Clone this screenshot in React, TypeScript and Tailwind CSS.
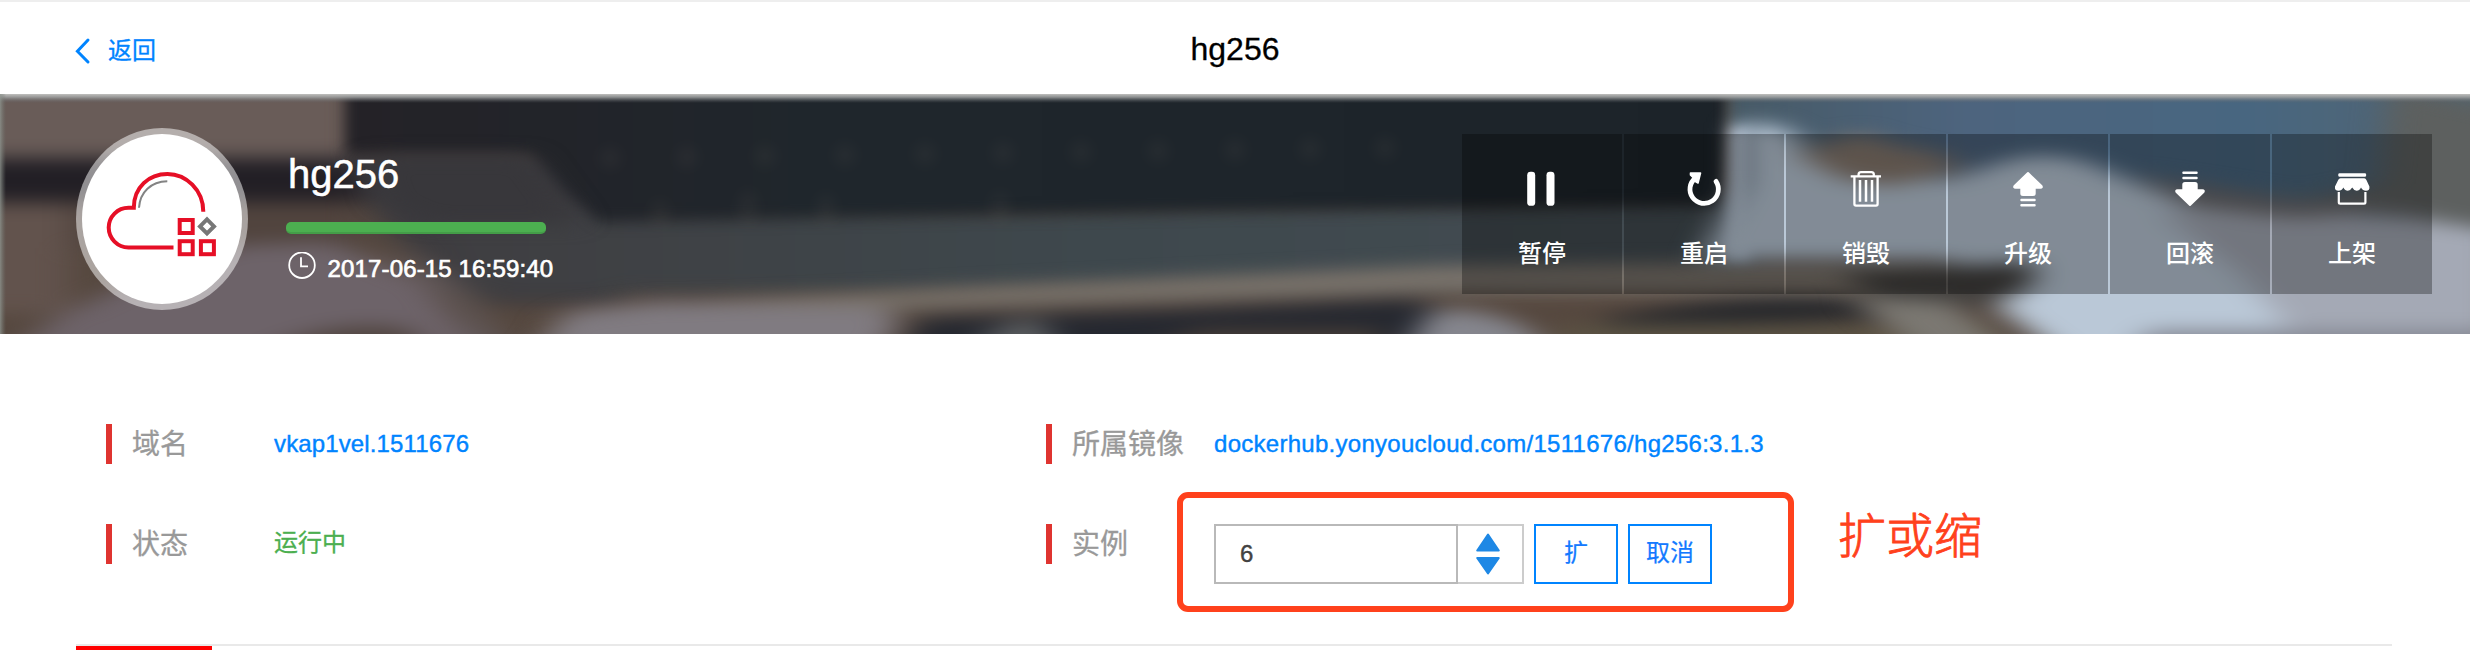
import type { ReactNode } from 'react';

const sans = "font-['Liberation_Sans','Noto_Sans_CJK_SC',sans-serif]";

function Backdrop() {
  return (
    <svg className="absolute inset-0 h-full w-full" viewBox="0 0 2470 240" preserveAspectRatio="none">
      <defs>
        <filter id="soft" x="-5%" y="-20%" width="110%" height="140%" colorInterpolationFilters="sRGB">
          <feGaussianBlur stdDeviation="16 9" />
        </filter>
        <filter id="fine" x="-5%" y="-20%" width="110%" height="140%" colorInterpolationFilters="sRGB">
          <feGaussianBlur stdDeviation="7" />
        </filter>
        <linearGradient id="top" x1="0" y1="0" x2="0" y2="1">
          <stop offset="0" stopColor="#c0c0be" />
          <stop offset="0.35" stopColor="#a0a2a2" stopOpacity="0.85" />
          <stop offset="1" stopColor="#606468" stopOpacity="0" />
        </linearGradient>
        <linearGradient id="left" x1="0" y1="0" x2="1" y2="0">
          <stop offset="0" stopColor="#8f958f" stopOpacity="0.8" />
          <stop offset="1" stopColor="#6f756f" stopOpacity="0" />
        </linearGradient>
        <linearGradient id="screen" x1="0" y1="0" x2="1" y2="0">
          <stop offset="0" stopColor="#242227" />
          <stop offset="0.35" stopColor="#1f262c" />
          <stop offset="1" stopColor="#1c2329" />
        </linearGradient>
        <linearGradient id="frame" x1="0" y1="0" x2="1" y2="0">
          <stop offset="0" stopColor="#3f3e41" />
          <stop offset="0.5" stopColor="#3e484d" />
          <stop offset="1" stopColor="#434c52" />
        </linearGradient>
        <linearGradient id="sky" x1="0" y1="0" x2="1" y2="0">
          <stop offset="0" stopColor="#475a66" />
          <stop offset="0.3" stopColor="#4d647e" />
          <stop offset="0.65" stopColor="#486680" />
          <stop offset="1" stopColor="#54646e" />
        </linearGradient>
      </defs>
      <rect width="2470" height="240" fill="#56483f" />
      <g filter="url(#soft)">
        <rect x="-60" y="-40" width="420" height="106" fill="#695c58" />
        <rect x="-60" y="64" width="440" height="44" fill="#221f25" />
        <rect x="-60" y="108" width="420" height="46" fill="#51443e" />
        <rect x="-60" y="110" width="130" height="110" fill="#62534d" />
        <path d="M-20 280L60 222L150 180L230 152L330 148L420 185L500 280Z" fill="#6d6369" />
        <path d="M220 280Q320 218 410 236L450 280Z" fill="#50443f" />
        <path d="M340 60H620V210H490L390 140Z" fill="#3c3b3f" />
        <path d="M385 150L460 215L490 280H535L450 180Z" fill="#5f5656" />
        <path d="M530 112L1000 118L1760 104V185L900 200H480L430 130Z" fill="url(#frame)" />
      </g>
      <g filter="url(#fine)">
        <path d="M345 -30H1727V40L1722 112L1200 118L900 123L600 128L565 100L530 62L345 62Z" fill="url(#screen)" />
      </g>
      <g filter="url(#soft)">
        <path d="M370 62H530L580 130H430L385 110Z" fill="#38373b" />
        <path d="M620 212L1000 192L1440 172L1760 168L1960 168V200L1440 198L1000 212L740 220L540 228Z" fill="#7b746c" />
        <path d="M510 280L570 218L660 208L880 214L900 228L860 280Z" fill="#807b81" />
        <path d="M895 280L920 224L1180 216L1410 205L1440 215L1380 280Z" fill="#252830" />
        <path d="M960 280Q985 222 1040 226L1080 280Z" fill="#5a5d60" />
        <path d="M1080 280L1200 236H1380V280Z" fill="#493f38" />
        <path d="M1390 280L1430 218Q1480 210 1530 236L1570 280Z" fill="#85868e" />
        <path d="M1600 226Q1700 204 1800 203Q1900 206 1910 218Q1840 232 1600 230Z" fill="#25272b" />
        <path d="M1560 232H1990V290H1560Z" fill="#5c5444" />
      </g>
      <g filter="url(#fine)">
        <path d="M1729 -40H2520V150H1729Z" fill="url(#sky)" />
        <path d="M1729 34L1750 34V165H1727Z" fill="#a9b6c6" />
      </g>
      <g filter="url(#soft)">
        <path d="M1742 28L1785 34L1840 85L1950 85L2010 66Q2060 54 2110 78L2190 112L2500 130V280H2090L2000 215L1950 166H1720L1700 166L1742 90Z" fill="#bac8d7" />
        <path d="M2160 118L2500 126V280H2330L2240 180Z" fill="#a4a9b5" />
        <path d="M2150 236H2520V290H2100Z" fill="#858893" />
        <path d="M2390 -10L2520 20V140L2400 122L2270 112L2380 90Z" fill="#5d605f" />
        <path d="M1795 60L1860 40L1890 50L1950 62L1960 76L1890 92L1840 84Z" fill="#87796e" />
        <path d="M1840 178L2030 168Q2050 196 1980 212L1880 205Z" fill="#413f3d" />
        <path d="M1850 203L1950 208L2050 290H1960Z" fill="#7b7872" />
        <path d="M2130 80L2290 104L2440 114L2300 124L2190 114Z" fill="#6a696c" />
      </g>
      <g filter="url(#fine)" opacity="0.1" fill="#706860">
        {[610, 687, 765, 845, 925, 1003, 1081, 1158, 1235, 1310, 1385].map((x, i) => (
          <ellipse key={x} cx={x} cy={64 - i} rx="11" ry="11" />
        ))}
        <ellipse cx="660" cy="120" rx="10" ry="14" />
        <ellipse cx="748" cy="114" rx="10" ry="18" />
        <ellipse cx="826" cy="116" rx="10" ry="16" />
        <ellipse cx="1000" cy="114" rx="10" ry="16" />
      </g>
      <rect width="2470" height="9" fill="url(#top)" />
      <rect width="6" height="240" fill="url(#left)" />
    </svg>
  );
}

function CloudLogo() {
  return (
    <svg className="h-[170px] w-[160px]" viewBox="0 0 160 170" fill="none" stroke="#e60f26" strokeWidth="4">
      <path d="M91.5 113.4H46.5A19.8 19.8 0 0 1 46.5 73.8H51.8C51.8 53 67 40 85.5 40S121.3 56 121.3 77.7" />
      <path d="M57 73.7C58 58 69 47.5 85.3 47.2" stroke="#838383" strokeWidth="2" />
      <rect x="97.7" y="86" width="13" height="13" />
      <rect x="97.7" y="107.2" width="13" height="13" />
      <rect x="118.9" y="107.2" width="13" height="13" />
      <path d="M125 85.3L132 92.4L125 99.5L118 92.4Z" stroke="#777777" />
    </svg>
  );
}

const actions: { label: string; icon: ReactNode }[] = [
  {
    label: '暂停',
    icon: (
      <g fill="#fff">
        <rect x="5.2" y="2.8" width="8" height="34" rx="3.4" />
        <rect x="24.5" y="2.8" width="8" height="34" rx="3.4" />
      </g>
    ),
  },
  {
    label: '重启',
    icon: (
      <g>
        <path d="M32 12.4A14.2 14.2 0 1 1 11.5 9" fill="none" stroke="#fff" strokeWidth="4.8" strokeLinecap="round" />
        <path d="M6.5 4L16.5 4L14 14L11.5 12.5L9.5 9L6.5 6Z" fill="#fff" stroke="#fff" strokeWidth="1.6" strokeLinejoin="round" />
      </g>
    ),
  },
  {
    label: '销毁',
    icon: (
      <g fill="none" stroke="#fff" strokeWidth="2.3">
        <path d="M4.7 7.4H35M12.6 7V5.2Q12.8 3.2 15 3.2H25.4Q27.6 3.2 27.8 5.2V7" />
        <path d="M8.4 7.4V35Q8.4 36.6 10 36.6H30Q31.6 36.6 31.6 35V7.4" />
        <path d="M14 11V32.8M20 11V32.8M26 11V32.8" strokeWidth="2.5" />
      </g>
    ),
  },
  {
    label: '升级',
    icon: (
      <g fill="#fff">
        <path
          d="M20 4L33.5 17Q34.5 18.7 32.5 18.7H26.7V24.5Q26.7 26 25 26H15Q13.3 26 13.3 24.5V18.7H7.5Q5.5 18.7 6.5 17Z"
          stroke="#fff"
          strokeWidth="2"
          strokeLinejoin="round"
        />
        <rect x="12.3" y="29.8" width="15.4" height="2.4" rx="1" />
        <rect x="12.3" y="35.1" width="15.4" height="2.4" rx="1" />
      </g>
    ),
  },
  {
    label: '回滚',
    icon: (
      <g fill="#fff">
        <rect x="12.3" y="2.5" width="15.4" height="2.4" rx="1" />
        <rect x="12.3" y="7.8" width="15.4" height="2.4" rx="1" />
        <path
          d="M20 36L33.5 23Q34.5 21.3 32.5 21.3H26.7V15.5Q26.7 14 25 14H15Q13.3 14 13.3 15.5V21.3H7.5Q5.5 21.3 6.5 23Z"
          stroke="#fff"
          strokeWidth="2"
          strokeLinejoin="round"
        />
      </g>
    ),
  },
  {
    label: '上架',
    icon: (
      <g fill="#fff">
        <rect x="6.3" y="4.2" width="27.8" height="3.6" rx="1.2" />
        <path d="M8.5 9.3H32.2Q33.8 9.3 34.4 11L37.4 17.5Q38 21.8 34 21.8Q30.8 21.8 29 18.6Q27.4 21.8 24.6 21.8Q22 21.8 20.2 18.6Q18.4 21.8 15.8 21.8Q13 21.8 11.4 18.6Q9.6 21.8 6.6 21.8Q2.4 21.8 3 17.5L6.2 11Q6.9 9.3 8.5 9.3Z" />
        <path d="M6.8 23V33.2Q6.8 34.6 8.2 34.6H32Q33.4 34.6 33.4 33.2V23" fill="none" stroke="#fff" strokeWidth="2.2" />
      </g>
    ),
  },
];

function Field({ label, children }: { label: string; children: ReactNode }) {
  return (
    <div className="flex h-[60px] items-start">
      <div className="h-10 w-1.5 bg-[#df3430]" />
      <div className="ml-5 w-[142px] whitespace-nowrap text-[28px] leading-[41px] text-[#999999] [-webkit-text-stroke:0.3px_#999999]">
        {label}
      </div>
      {children}
    </div>
  );
}

export default function App() {
  return (
    <div className={`${sans} flex h-[650px] w-[2470px] flex-col overflow-hidden bg-white`}>
      <header className="grid h-[94px] shrink-0 grid-cols-3 items-center border-t-2 border-[#eeeeee] pt-1 text-[#0084ff]">
        <a className="flex items-center pl-[74px] pt-0.5 text-[24px] leading-9">
          <svg className="h-7 w-[17px]" viewBox="0 0 17 28" fill="none" stroke="#0084ff" strokeWidth="3" strokeLinecap="round">
            <path d="M14 3L3.4 14.2L14 25" />
          </svg>
          <span className="ml-[17px] [-webkit-text-stroke:0.3px_#0084ff]">返回</span>
        </a>
        <h1 className="pb-[3px] text-center text-[32px] leading-10 text-black [-webkit-text-stroke:0.3px_black]">hg256</h1>
      </header>

      <section className="relative h-60 shrink-0 overflow-hidden">
        <Backdrop />
        <div className="relative flex h-full items-start justify-between pl-[76px] pr-[38px]">
          <div className="flex items-start">
            <div className="mt-[34px] h-[182px] w-[172px] rounded-[50%] bg-white/50 p-1.5">
              <div className="overflow-hidden rounded-[50%] bg-white">
                <CloudLogo />
              </div>
            </div>
            <div className="ml-[38px] mt-[56px] w-[280px] text-white">
              <div className="pl-0.5 text-[40px] leading-[48px] [-webkit-text-stroke:0.5px_white]">hg256</div>
              <div className="mt-6 h-3 w-[260px] overflow-hidden rounded-[5px] border-b-2 border-[#449d48] bg-[#4caf50]" />
              <div className="mt-3 flex items-center">
                <svg className="ml-[1.5px] h-[28px] w-[28px]" viewBox="0 0 28 28" fill="none" stroke="#fff" strokeWidth="1.8">
                  <circle cx="14" cy="13.2" r="12.8" />
                  <path d="M13 5.2V14.4H20" />
                </svg>
                <span className="ml-3 mt-[7px] whitespace-nowrap text-[24px] leading-8 tracking-[0.15px] [-webkit-text-stroke:0.7px_white]">
                  2017-06-15 16:59:40
                </span>
              </div>
            </div>
          </div>
          <div className="mt-10 flex gap-0.5">
            {actions.map((a) => (
              <button key={a.label} className="flex h-40 w-40 flex-col items-center bg-black/30 pt-[35px] text-white">
                <svg className="h-10 w-10" viewBox="0 0 40 40">
                  {a.icon}
                </svg>
                <span className="mt-[27px] text-[24px] font-medium leading-9">{a.label}</span>
              </button>
            ))}
          </div>
        </div>
      </section>

      <main className="flex grow flex-col pl-[76px] pr-[78px]">
        <div className="grid grow grid-cols-[940px_1fr] grid-rows-[60px_60px] gap-y-10 pl-[30px] pt-[90px]">
          <Field label="域名">
            <a className="text-[24px] leading-10 tracking-[0.13px] text-[#0084ff] [-webkit-text-stroke:0.4px_#0084ff]">vkap1vel.1511676</a>
          </Field>
          <Field label="所属镜像">
            <a className="text-[24px] leading-10 tracking-[0.28px] text-[#0084ff] [-webkit-text-stroke:0.4px_#0084ff]">
              dockerhub.yonyoucloud.com/1511676/hg256:3.1.3
            </a>
          </Field>
          <Field label="状态">
            <span className="text-[24px] leading-[38px] text-[#4caf50] [-webkit-text-stroke:0.3px_#4caf50]">运行中</span>
          </Field>
          <Field label="实例">
            <div className="relative flex">
              <div className="flex h-[60px] w-[244px] items-center border-2 border-[#b9b9b9] pl-6 text-[24px] text-[#424242] [-webkit-text-stroke:0.4px_#424242]">6</div>
              <div className="flex h-[60px] w-[66px] items-center justify-center border-2 border-l-0 border-[#cccccc]">
                <svg className="-ml-1 h-[44px] w-[26px]" viewBox="0 0 26 44" fill="#1e88e5" stroke="#1e88e5" strokeWidth="2" strokeLinejoin="round">
                  <path d="M13 2.5L23.8 18.5H2.2Z" />
                  <path d="M13 41.5L23.8 26H2.2Z" />
                </svg>
              </div>
              <button className="ml-2.5 h-[60px] w-[84px] border-2 border-[#0084ff] pb-0.5 text-[24px] leading-[54px] text-[#147aff] [-webkit-text-stroke:0.2px_#147aff]">扩</button>
              <button className="ml-2.5 h-[60px] w-[84px] border-2 border-[#0084ff] pb-0.5 text-[24px] leading-[54px] text-[#147aff] [-webkit-text-stroke:0.2px_#147aff]">取消</button>
              <div className="absolute -left-[37px] -top-8 h-[120px] w-[617px] rounded-[11px] border-[6px] border-[#ff411c]" />
              <div className="absolute -top-[19px] left-[624px] whitespace-nowrap text-[48px] font-light leading-[64px] text-[#ff411c] [-webkit-text-stroke:0.9px_#ff411c]">
                扩或缩
              </div>
            </div>
          </Field>
        </div>
        <div className="h-1.5 border-t-2 border-[#e9e9e9]">
          <div className="h-1 w-[136px] bg-[#ff0000]" />
        </div>
      </main>
    </div>
  );
}
